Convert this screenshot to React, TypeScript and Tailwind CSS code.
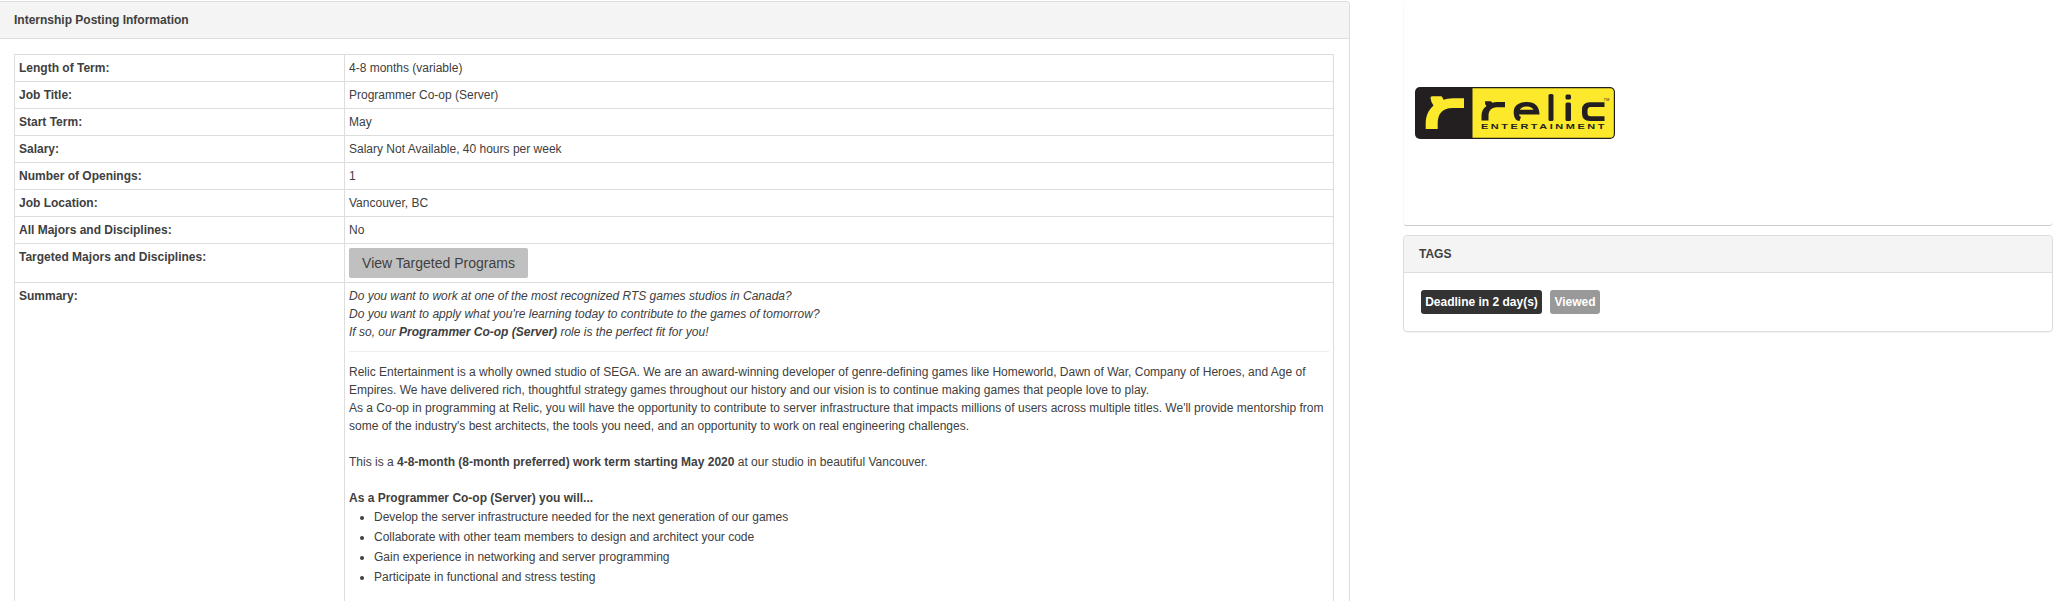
import type { ReactNode } from "react";

const rows: [string, string][] = [
  ["Length of Term:", "4-8 months (variable)"],
  ["Job Title:", "Programmer Co-op (Server)"],
  ["Start Term:", "May"],
  ["Salary:", "Salary Not Available, 40 hours per week"],
  ["Number of Openings:", "1"],
  ["Job Location:", "Vancouver, BC"],
  ["All Majors and Disciplines:", "No"],
];

const duties = [
  "Develop the server infrastructure needed for the next generation of our games",
  "Collaborate with other team members to design and architect your code",
  "Gain experience in networking and server programming",
  "Participate in functional and stress testing",
];

function Row({ label, children }: { label: string; children: ReactNode }) {
  return (
    <div className="flex border-b border-[#dddddd]">
      <div className="w-[330px] shrink-0 border-r border-[#dddddd] p-1 font-bold">{label}</div>
      <div className="min-w-0 flex-1 p-1">{children}</div>
    </div>
  );
}

function RelicLogo() {
  return (
    <svg width="200" height="52" viewBox="0 0 200 52" className="block">
      <rect width="200" height="52" rx="5" fill="#231f20" />
      <path d="M57.500 1.200H195a3.800 3.800 0 0 1 3.800 3.800V47a3.800 3.800 0 0 1-3.800 3.800H57.500Z" fill="#fde92b" />
      <path
        d="M15.500 11Q15.500 9.300 17 9.300H26Q27.300 9.300 27.600 10.800L28.500 12.800Q32 11.300 38 11.300H49V21H38C26 21 22.700 28 22.700 37V42H10.700V37C10.700 29 13 23.500 18.500 18.500Q16 15.500 15.500 11Z"
        fill="#fde92b"
      />
      <g fill="#231f20">
        <path d="M70 14.200H75.500Q76.700 14.200 77.200 15.800Q79.500 15 82 15H90V20.300H82C76 20.300 73.500 24 73.500 29V33.500H66.500V29C66.500 24.500 68 21.500 71.500 19Q69.500 17.500 70 14.200Z" />
        <path
          fillRule="evenodd"
          d="M112 15C104 15 98.700 18.500 98.700 25C98.700 30 100.500 33.800 104.500 34L106 29.800C104.800 29.500 104.200 28.800 104 27.500H124.500C124.500 19.500 120 15 112 15ZM104.800 22.800C106 20.500 108.500 19.500 112 19.500C115.500 19.500 117.500 20.800 118.500 22.800Z"
        />
        <rect x="133.500" y="7" width="5" height="27" rx="1.500" />
        <rect x="150.500" y="7.500" width="5.500" height="5" rx="1.500" />
        <rect x="150.500" y="15.500" width="5.500" height="18.500" rx="1.500" />
        <path d="M189.500 15.300V20H175.500Q172.500 20 172.500 23.500V26Q172.500 29.300 175.500 29.300H189.500V34H175Q167 34 167 26.500V23Q167 15.300 175 15.300Z" />
        <text
          x="66"
          y="42"
          fontSize="6.400"
          fontWeight="700"
          fontFamily="Liberation Sans, sans-serif"
          letterSpacing="1.500"
          textLength="126"
          lengthAdjust="spacingAndGlyphs"
        >
          ENTERTAINMENT
        </text>
        <text x="188.500" y="13.500" fontSize="4" fontFamily="Liberation Sans, sans-serif">TM</text>
      </g>
    </svg>
  );
}

export default function App() {
  return (
    <div className="flex h-[601px] overflow-hidden bg-white pt-px font-['Liberation_Sans',Arial,sans-serif] text-[12px] leading-[18px] text-[#404040]">
      <main className="h-[640px] w-[1350px] shrink-0 rounded-tr border-r border-t border-[#dddddd]">
        <h2 className="h-[37px] rounded-tr border-b border-[#dddddd] bg-[#f4f4f4] pl-[14px] pt-[9px] font-bold">
          Internship Posting Information
        </h2>
        <div className="ml-[14px] mt-[15px] w-[1320px] border-x border-t border-[#dddddd]">
          {rows.map(([label, value]) => (
            <Row key={label} label={label}>{value}</Row>
          ))}
          <Row label="Targeted Majors and Disciplines:">
            <button className="block h-[30px] w-[179px] rounded-[2px] bg-[#c0c0c0] text-[14px]">View Targeted Programs</button>
          </Row>
          <Row label="Summary:">
            <div className="h-[360px]">
              <div className="italic">
                <p>Do you want to work at one of the most recognized RTS games studios in Canada?</p>
                <p>Do you want to apply what you're learning today to contribute to the games of tomorrow?</p>
                <p>If so, our <b>Programmer Co-op (Server)</b> role is the perfect fit for you!</p>
              </div>
              <hr className="mb-[11px] mt-[10px] border-[#eeeeee]" />
              <p>
                Relic Entertainment is a wholly owned studio of SEGA. We are an award-winning developer of genre-defining games like Homeworld, Dawn of War, Company of Heroes, and Age of<br />
                Empires. We have delivered rich, thoughtful strategy games throughout our history and our vision is to continue making games that people love to play.
              </p>
              <p className="mb-[18px]">
                As a Co-op in programming at Relic, you will have the opportunity to contribute to server infrastructure that impacts millions of users across multiple titles. We'll provide mentorship from<br />
                some of the industry's best architects, the tools you need, and an opportunity to work on real engineering challenges.
              </p>
              <p className="mb-[18px]">
                This is a <b>4-8-month (8-month preferred) work term starting May 2020</b> at our studio in beautiful Vancouver.
              </p>
              <p className="font-bold">As a Programmer Co-op (Server) you will...</p>
              <ul className="list-disc pl-[25px] leading-[20px]">
                {duties.map((duty) => <li key={duty}>{duty}</li>)}
              </ul>
            </div>
          </Row>
        </div>
      </main>
      <aside className="ml-[53px] w-[650px]">
        <section className="h-[225px] rounded border-b border-l border-b-[#cccccc] border-l-[#f8f8f8] pl-[11px] pt-[86px]">
          <RelicLogo />
        </section>
        <section className="mt-[9px] h-[97px] rounded border border-[#dddddd] shadow-[0_1px_1px_rgba(0,0,0,0.05)]">
          <h3 className="h-[37px] rounded-t border-b border-[#dddddd] bg-[#f4f4f4] pl-[15px] pt-[9px] font-bold">TAGS</h3>
          <div className="flex gap-2 pl-[17px] pt-[17px] font-bold text-white">
            <span className="h-6 w-[121px] rounded-[3px] bg-[#333333] text-center leading-6">Deadline in 2 day(s)</span>
            <span className="h-6 w-[50px] rounded-[3px] bg-[#999999] text-center leading-6">Viewed</span>
          </div>
        </section>
      </aside>
    </div>
  );
}
